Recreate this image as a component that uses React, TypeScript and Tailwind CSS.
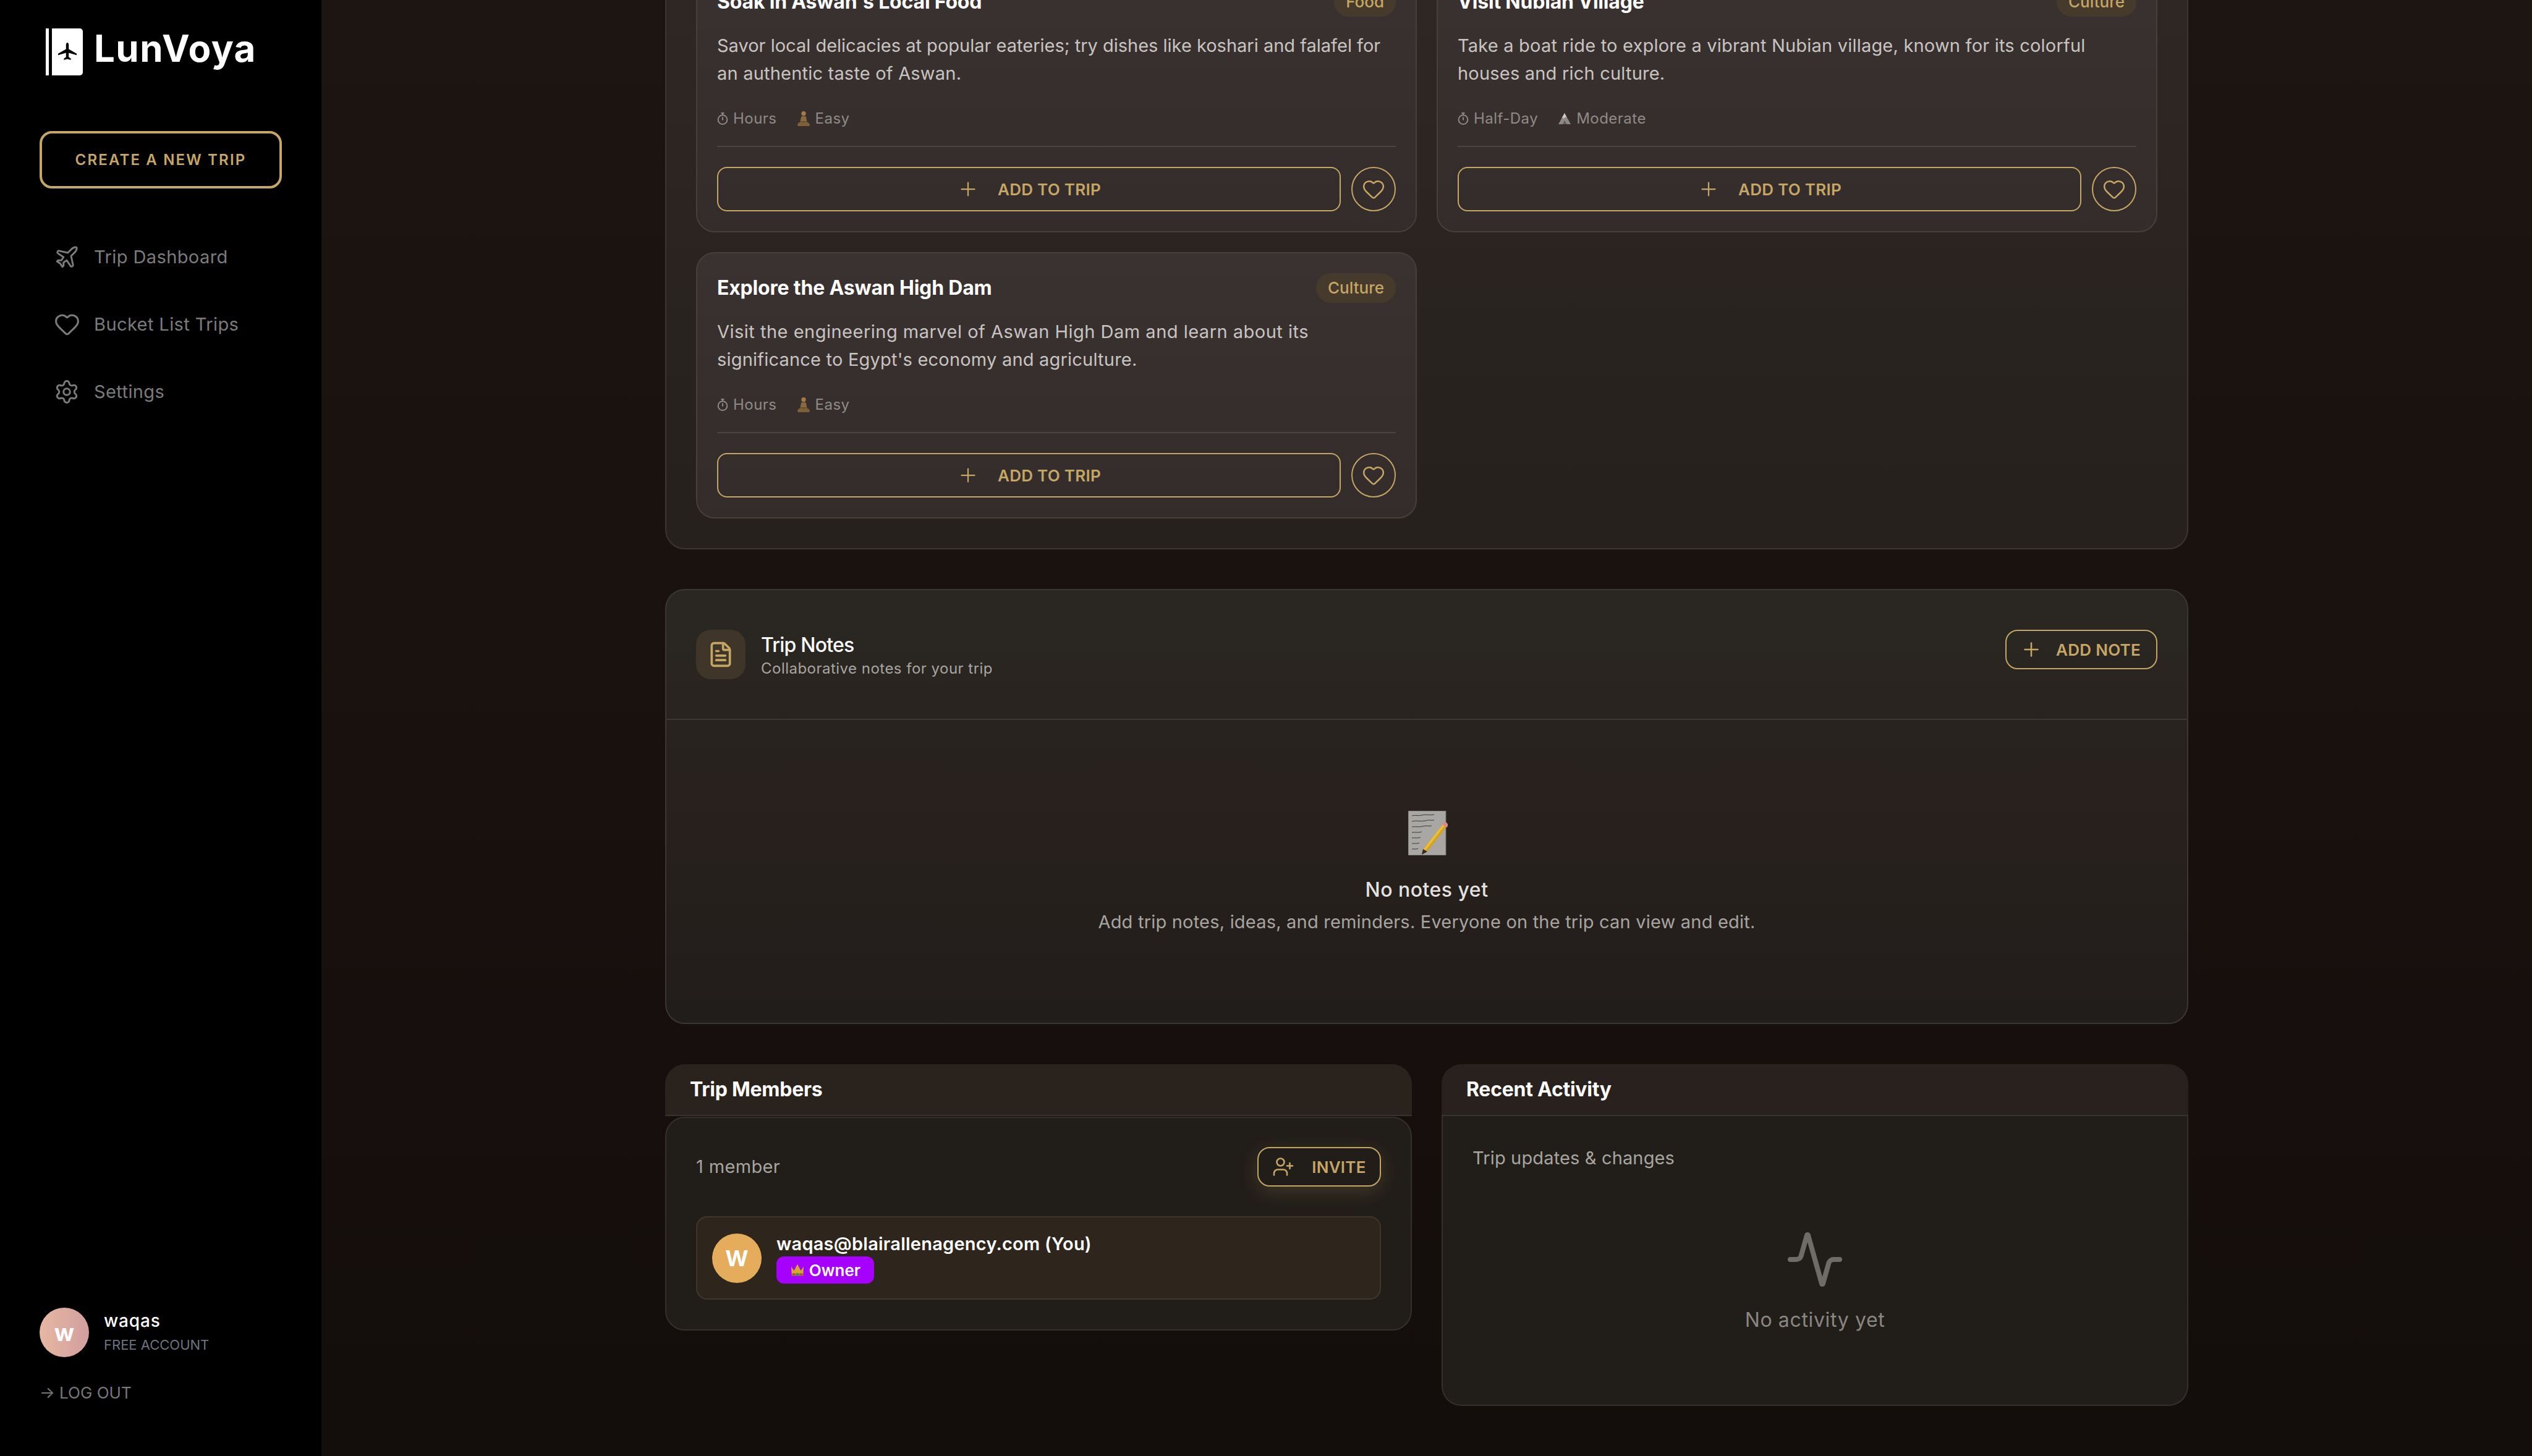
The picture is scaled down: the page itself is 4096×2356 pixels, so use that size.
import React from "react";
import { Plane, Heart, Settings, Plus, FileText, UserPlus, Activity } from "lucide-react";

const Stopwatch = () => (
  <svg viewBox="0 0 22 26" className="w-[18px] h-[22px] shrink-0" fill="none" stroke="#8f8a87" strokeWidth="2.4">
    <circle cx="11" cy="15" r="9" />
    <path d="M11 2v4M8 2h6M11 10v6" />
  </svg>
);
const Meditate = () => (
  <svg viewBox="0 0 24 28" className="w-[22px] h-[26px] shrink-0">
    <circle cx="12" cy="5" r="4" fill="#a57a45" />
    <path d="M8 10h8l2 9H6z" fill="#8d6a3c" />
    <path d="M1 24c3-5 7-5 11-4 4-1 8-1 11 4l-1 3H2z" fill="#7d6038" />
  </svg>
);
const Mountain = () => (
  <svg viewBox="0 0 24 22" className="w-[22px] h-[20px] shrink-0">
    <path d="M12 1 23 21H1z" fill="#8c8886" />
    <path d="M12 1l4 8-3-1-2 3-2-2-2 1z" fill="#d0cdcb" />
    <path d="M9 21l3-7 4 7z" fill="#5f5b59" />
  </svg>
);
const Crown = () => (
  <svg viewBox="0 0 26 24" className="w-[24px] h-[22px] shrink-0">
    <path d="M2 6l5 7 6-11 6 11 5-7-1 16H3z" fill="#d9a52e" />
    <path d="M3 18h20v4H3z" fill="#a8741f" />
    <circle cx="13" cy="19.5" r="2.2" fill="#1f9d5c" />
    <circle cx="6.5" cy="19.5" r="1.4" fill="#b3344c" />
    <circle cx="19.5" cy="19.5" r="1.4" fill="#b3344c" />
  </svg>
);
const Memo = () => (
  <svg viewBox="0 0 64 72" className="w-[64px] h-[72px] ml-[4px]" fill="none">
    <rect x="0" y="0" width="61" height="72" fill="#a9a7a4" stroke="#6e6a66" />
    <path d="M6 8c6-2 10 1 16-1s12 1 20-1M6 17c8-2 14 1 22-1s8 0 14-1M6 26c6-1 12 1 18-1s10 1 14-1M6 35c6-1 10 1 16-1M6 44c5-1 8 1 14-1M6 53c5-1 8 1 12-1M6 62c4-1 6 1 10-1" stroke="#3b3936" strokeWidth="1" />
    <path d="M56 22 62 26 31 66 24 62z" fill="#d4a21f" />
    <path d="M56 22l3 2-31 40-3-2z" fill="#e9bf3d" />
    <path d="M56 20c2-3 5-2 7 0s2 4 0 6l-1 1-7-5z" fill="#d98a8a" />
    <path d="M24 62l7 4-9 5z" fill="#2f2a25" />
  </svg>
);

const LogoMark = () => (
  <div className="flex h-[76px] gap-[5px]">
    <div className="w-[5px] bg-white" />
    <div className="w-[50px] rounded-r-[5px] rounded-l-none bg-white flex items-center justify-center">
      <svg viewBox="0 0 32 32" className="w-[32px] h-[34px]">
        <path d="M16 1c1.4 0 2.2 1.8 2.2 4v6.4L31 18.8v2.4l-12.8-3.6v6.6l3.4 2.6V29L16 27.6 10.400 29v-2.200l3.400-2.600v-6.600L1 21.200v-2.400l12.800-7.400V5c0-2.200.8-4 2.200-4z" fill="#000" />
      </svg>
    </div>
  </div>
);

function NavItem({ icon, label }: { icon: React.ReactNode; label: string }) {
  return (
    <div className="flex items-center h-[109px] pl-[26px] gap-[26px] text-[#7b7b7b] text-[29px] tracking-[0.014em]">
      <span className="w-[36px] h-[36px] flex items-center justify-center">{icon}</span>
      <span>{label}</span>
    </div>
  );
}

function Idea({ title, badge, desc1, desc2, time, level, hard, lineClass }: { title: string; badge: string; desc1: string; desc2: string; time: string; level: string; hard?: boolean; lineClass: string }) {
  return (
    <div className="rounded-[30px] border-2 border-[#45403d] bg-gradient-to-b from-[#3a3230] to-[#342c2a] p-[32px] h-[431px] flex flex-col">
      <div className="flex items-center justify-between h-[48px]">
        <h3 className="text-white text-[32px] font-bold leading-[48px] tracking-[-0.006em]">{title}</h3>
        <span className="h-[48px] px-[19px] rounded-[24px] bg-[#453a2c] text-[#c6a664] text-[26px] font-medium leading-[48px]">{badge}</span>
      </div>
      <p className="mt-[24px] text-[#c8c4c1] text-[29px] leading-[45px] tracking-[0.007em] whitespace-nowrap">
        <span className={lineClass}>{desc1}</span>
        <br />
        {desc2}
      </p>
      <div className="mt-[33px] h-[36px] flex items-center text-[#8f8a87] text-[24px] tracking-[0.02em]">
        <span className="flex items-center gap-[8px]"><Stopwatch />{time}</span>
        <span className="flex items-center gap-[8px] ml-[32px]">{hard ? <Mountain /> : <Meditate />}{level}</span>
      </div>
      <div className="mt-[26px] h-[2px] bg-[#4a4441]" />
      <div className="mt-[32px] flex gap-[17px]">
        <button className="flex-1 h-[72px] rounded-[16px] border-2 border-[#c6a664] flex items-center justify-center gap-[30px] text-[#c6a664] text-[26px] font-semibold tracking-[0.01em]">
          <Plus className="w-[36px] h-[36px]" strokeWidth={1.5} />
          ADD TO TRIP
        </button>
        <button className="w-[72px] h-[72px] rounded-full border-2 border-[#c6a664] flex items-center justify-center text-[#c6a664]">
          <Heart className="w-[38px] h-[38px]" strokeWidth={1.6} />
        </button>
      </div>
    </div>
  );
}

export default function App() {
  return (
    <div className="flex h-screen w-screen overflow-hidden bg-black [font-family:Inter,sans-serif]">
      <aside className="w-[520px] shrink-0 bg-black px-[64px] flex flex-col">
        <div className="pt-[46px] pl-[10px] flex items-start gap-[18px] h-[122px]">
          <LogoMark />
          <span className="text-white text-[60px] font-bold leading-[70px] mt-[-3px] tracking-[0.024em]">LunVoya</span>
        </div>
        <button className="mt-[90px] h-[93px] rounded-[20px] border-4 border-[#c6a664] text-[#c6a664] text-[24px] font-semibold tracking-[0.09em]">
          CREATE A NEW TRIP
        </button>
        <nav className="mt-[56px] flex flex-col">
          <NavItem icon={<Plane className="w-[42px] h-[42px] shrink-0" strokeWidth={1.7} />} label="Trip Dashboard" />
          <NavItem icon={<Heart className="w-[43px] h-[43px] shrink-0" strokeWidth={1.7} />} label="Bucket List Trips" />
          <NavItem icon={<Settings className="w-[42px] h-[42px] shrink-0" strokeWidth={1.7} />} label="Settings" />
        </nav>
        <div className="mt-auto pb-[84px]">
          <div className="flex items-center gap-[24px]">
            <div className="w-[80px] h-[80px] rounded-full bg-gradient-to-r from-[#e6b8a2] to-[#d29e9f] flex items-center justify-center text-white text-[38px] font-bold">w</div>
            <div className="flex flex-col">
              <span className="text-white text-[28px] font-medium leading-[38px] tracking-[0.03em] mt-[-3px]">waqas</span>
              <span className="text-[#6b7280] text-[22px] leading-[32px] mt-[4px]">FREE ACCOUNT</span>
            </div>
          </div>
          <div className="mt-[40px] text-[#777777] text-[26px] leading-[36px]">→ LOG OUT</div>
        </div>
      </aside>

      <main className="flex-1 min-w-0 overflow-hidden bg-gradient-to-b from-[#1d1512] to-[#130d0b]">
        <div className="mx-auto w-[2464px] mt-[-105px]">
          <section className="rounded-[32px] border-2 border-[#3b3633] bg-gradient-to-b from-[#2f2724] to-[#26211d] p-[48px]">
            <div className="grid grid-cols-2 gap-[32px]">
              <Idea lineClass="tracking-[0em]" title="Soak in Aswan's Local Food" badge="Food" desc1="Savor local delicacies at popular eateries; try dishes like koshari and falafel for" desc2="an authentic taste of Aswan." time="Hours" level="Easy" />
              <Idea lineClass="tracking-[0.007em]" title="Visit Nubian Village" badge="Culture" desc1="Take a boat ride to explore a vibrant Nubian village, known for its colorful" desc2="houses and rich culture." time="Half-Day" level="Moderate" hard />
              <Idea lineClass="tracking-[0.017em]" title="Explore the Aswan High Dam" badge="Culture" desc1="Visit the engineering marvel of Aswan High Dam and learn about its" desc2="significance to Egypt's economy and agriculture." time="Hours" level="Easy" />
            </div>
          </section>

          <section className="mt-[64px] h-[704px] rounded-[32px] border-2 border-[#3b3633] bg-gradient-to-b from-[#2a2722] via-[#28211e] to-[#211d1a] flex flex-col">
            <div className="flex items-start justify-between px-[48px] pt-[64px] pb-[64px] border-b-2 border-[#3d3835]">
              <div className="flex items-start gap-[25px]">
                <div className="w-[80px] h-[80px] rounded-[24px] bg-[#3f3528] flex items-center justify-center text-[#c6a664]">
                  <FileText className="w-[44px] h-[44px]" strokeWidth={2} />
                </div>
                <div className="flex flex-col h-[80px] pt-[4px]">
                  <span className="text-white text-[32px] font-medium leading-[42px] tracking-[-0.025em]">Trip Notes</span>
                  <span className="text-[#a8a5a0] text-[24px] leading-[34px] tracking-[0.02em]">Collaborative notes for your trip</span>
                </div>
              </div>
              <button className="h-[64px] rounded-[20px] border-2 border-[#c6a664] pl-[22px] pr-[25px] flex items-center gap-[22px] text-[#c6a664] text-[26px] font-semibold tracking-[0.01em]">
                <Plus className="w-[36px] h-[36px]" strokeWidth={1.7} />
                ADD NOTE
              </button>
            </div>
            <div className="flex flex-col items-center pt-[147px]">
              <Memo />
              <div className="mt-[34px] text-[#e4e2e0] text-[32px] font-medium leading-[44px] tracking-[0.015em]">No notes yet</div>
              <div className="mt-[7px] text-[#a8a5a0] text-[29px] leading-[45px] tracking-[0.007em]">Add trip notes, ideas, and reminders. Everyone on the trip can view and edit.</div>
            </div>
          </section>

          <div className="mt-[65px] grid grid-cols-2 gap-[48px] items-start">
            <section>
              <div className="h-[84px] rounded-t-[32px] bg-[#2a221d] border-b-2 border-[#38322e] px-[40px] flex items-center">
                <h3 className="text-white text-[32px] font-bold tracking-[-0.008em]">Trip Members</h3>
              </div>
              <div className="mt-[1px] h-[346px] rounded-[32px] border-2 border-[#35302c] bg-[#211d19] px-[48px] pt-[47px]">
                <div className="flex items-center justify-between h-[64px]">
                  <span className="text-[#a8a5a0] text-[29px] tracking-[0.012em]">1 member</span>
                  <button className="h-[64px] w-[200px] rounded-[20px] border-2 border-[#c6a664] flex items-center justify-center gap-[28px] text-[#c6a664] text-[26px] font-semibold tracking-[0.01em] shadow-[0_8px_32px_rgba(198,166,100,0.2)]">
                    <UserPlus className="w-[36px] h-[36px]" strokeWidth={1.7} />
                    INVITE
                  </button>
                </div>
                <div className="mt-[48px] h-[135px] rounded-[18px] border-2 border-[#40362a] bg-[#2e261d] pl-[24px] flex items-center gap-[24px]">
                  <div className="w-[80px] h-[80px] rounded-full bg-[#e5ac5b] flex items-center justify-center text-white text-[36px] font-bold">W</div>
                  <div className="flex flex-col">
                    <span className="text-white text-[29px] font-semibold leading-[38px] tracking-[0.008em]">waqas@blairallenagency.com (You)</span>
                    <span className="mt-[1px] self-start w-[158px] h-[44px] rounded-[12px] bg-[#a600ff] text-white text-[26px] font-semibold flex items-center justify-center gap-[7px]"><Crown />Owner</span>
                  </div>
                </div>
              </div>
            </section>
            <section>
              <div className="h-[84px] rounded-t-[32px] bg-[#28211d] border-b-2 border-[#38322e] px-[40px] flex items-center">
                <h3 className="text-white text-[32px] font-bold tracking-[-0.008em]">Recent Activity</h3>
              </div>
              <div className="h-[469px] rounded-b-[32px] border-2 border-t-0 border-[#35302c] bg-[#211d19] px-[48px] pt-[48px] flex flex-col">
                <span className="text-[#a8a5a0] text-[29px] leading-[40px] tracking-[0.005em]">Trip updates & changes</span>
                <div className="mt-[96px] flex flex-col items-center">
                  <Activity className="w-[96px] h-[96px] text-[#6f6b68]" strokeWidth={2} />
                  <span className="mt-[28px] text-[#8a8682] text-[32px] leading-[44px] tracking-[0.02em]">No activity yet</span>
                </div>
              </div>
            </section>
          </div>
        </div>
      </main>
    </div>
  );
}
